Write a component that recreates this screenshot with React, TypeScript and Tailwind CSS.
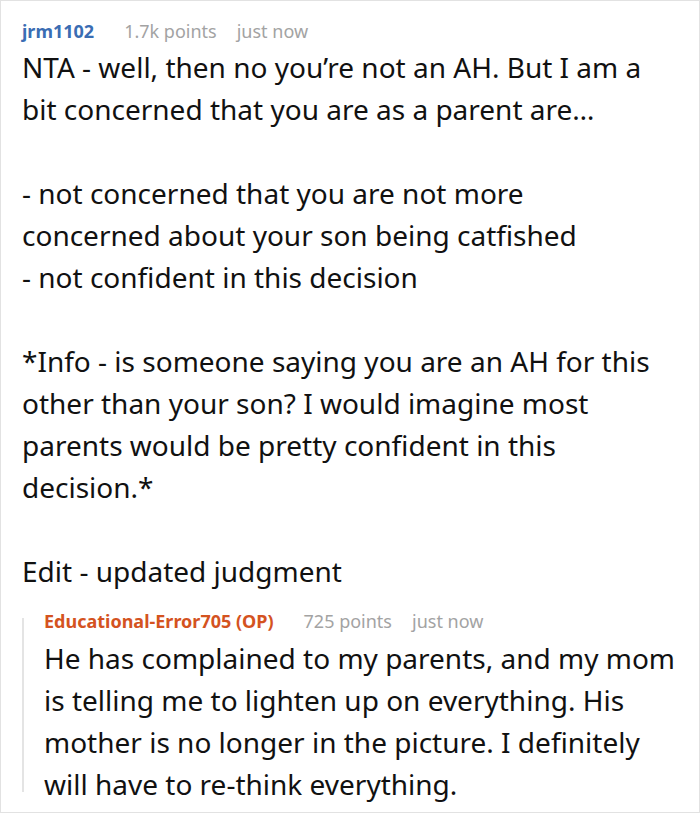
import React from 'react';

type CommentMeta = {
    author: string;
    points: string;
    time: string;
    isOp?: boolean;
};

const mainLines: string[][] = [
    ['NTA - well, then no you’re not an AH. But I am a', 'bit concerned that you are as a parent are…'],
    ['- not concerned that you are not more', 'concerned about your son being catfished', '- not confident in this decision'],
    [
        '*Info - is someone saying you are an AH for this',
        'other than your son? I would imagine most',
        'parents would be pretty confident in this',
        'decision.*',
    ],
    ['Edit - updated judgment'],
];

const replyLines = [
    'He has complained to my parents, and my mom',
    'is telling me to lighten up on everything. His',
    'mother is no longer in the picture. I definitely',
    'will have to re-think everything.',
];

function CommentHeader({ author, points, time, isOp }: CommentMeta) {
    return (
        <div className="flex items-center text-[18px] leading-[26px]">
            <span className={`font-bold mr-[30px] ${isOp ? 'text-[#d4531f]' : 'text-[#3a6db3]'}`}>{author}</span>
            <span className="text-[#a3a3a3] mr-[20px]">{points}</span>
            <span className="text-[#a3a3a3]">{time}</span>
        </div>
    );
}

function Lines({ lines }: { lines: string[] }) {
    return (
        <p className="whitespace-nowrap">
            {lines.map((line, i) => (
                <React.Fragment key={i}>
                    {line}
                    {i < lines.length - 1 && <br />}
                </React.Fragment>
            ))}
        </p>
    );
}

export default function App() {
    return (
        <div
            className="w-[700px] h-[813px] bg-white border border-[#e2e2e2] overflow-hidden text-[#111111]"
            style={{ fontFamily: '"Noto Sans", "Open Sans", sans-serif' }}
        >
            <div className="pl-[21px] pr-[21px] pt-[17px]">
                <CommentHeader author="jrm1102" points="1.7k points" time="just now" />

                {/* Main comment body */}
                <div className="mt-[2px] text-[28px] leading-[42px] flex flex-col gap-[42px]">
                    {mainLines.map((para, i) => (
                        <Lines key={i} lines={para} />
                    ))}
                </div>

                {/* OP reply */}
                <div className="mt-[16px] flex">
                    <div className="w-[2px] bg-[#e4e4e4] mt-[10px] mb-[13px] shrink-0" />
                    <div className="pl-[20px]">
                        <CommentHeader author="Educational-Error705 (OP)" points="725 points" time="just now" isOp />
                        <div className="mt-[3px] text-[28px] leading-[42px]">
                            <Lines lines={replyLines} />
                        </div>
                    </div>
                </div>
            </div>
        </div>
    );
}
